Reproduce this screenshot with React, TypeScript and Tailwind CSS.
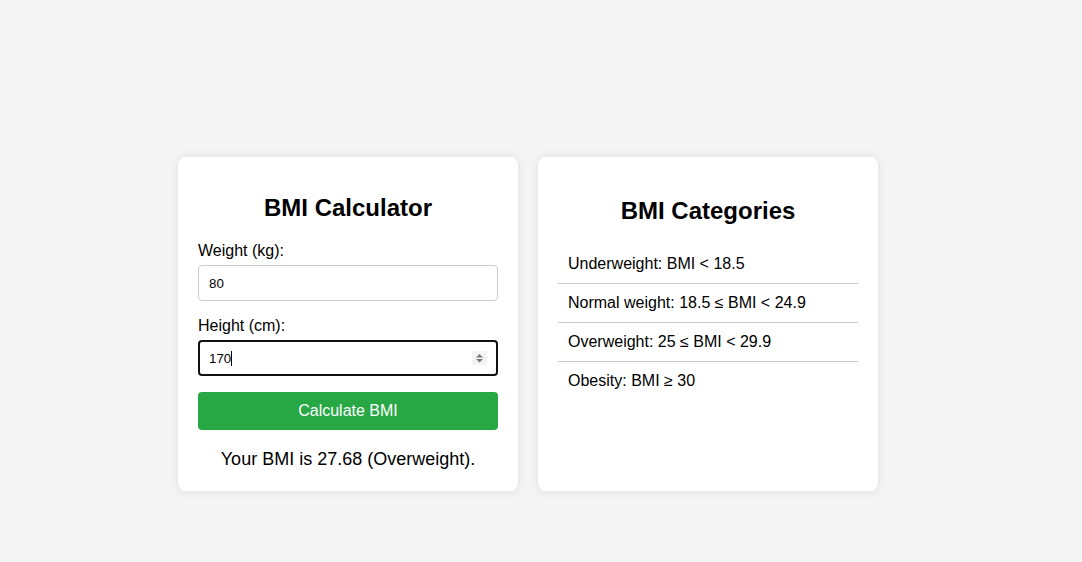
import { useState } from "react";

const categories = [
  "Underweight: BMI < 18.5",
  "Normal weight: 18.5 ≤ BMI < 24.9",
  "Overweight: 25 ≤ BMI < 29.9",
  "Obesity: BMI ≥ 30",
];

function Spinner() {
  return (
    <svg width="15" height="14" viewBox="0 0 15 14" className="absolute right-[11px] top-[11px] pointer-events-none">
      <rect x="0" y="0" width="15" height="14" fill="#f3f3f3" />
      <path d="M7.5 3 L11 6.5 L4 6.5 Z" fill="#7a7a7a" />
      <path d="M4 8 L11 8 L7.5 11.5 Z" fill="#7a7a7a" />
    </svg>
  );
}

export default function App() {
  const [weight, setWeight] = useState("80");
  const [height, setHeight] = useState("170");

  return (
    <div
      className="min-h-[562px] bg-[#f4f4f4] flex items-stretch gap-5 pl-[178px] pt-[157px] pb-[71px] text-black"
      style={{ fontFamily: '"Liberation Sans", Arial, sans-serif' }}
    >
      {/* calculator */}
      <div className="w-[340px] bg-white rounded-lg shadow-[0_0_10px_rgba(0,0,0,0.1)] px-5 pt-5 pb-[21px] flex flex-col">
        <h2 className="mt-[17px] mb-5 text-2xl leading-[28px] font-bold text-center">BMI Calculator</h2>

        <label className="block text-base leading-[18px] mb-[5px]">Weight (kg):</label>
        <input
          type="text"
          value={weight}
          onChange={(e) => setWeight(e.target.value)}
          className="w-full h-9 border border-[#cccccc] rounded px-[10px] text-[13.33px] outline-none mb-4"
          style={{ fontFamily: '"Liberation Sans", Arial, sans-serif' }}
        />

        <label className="block text-base leading-[18px] mb-[5px]">Height (cm):</label>
        <div className="relative mb-4">
          <input
            type="text"
            value={height}
            onChange={(e) => setHeight(e.target.value)}
            className="w-full h-9 border-2 border-[#101010] rounded px-[9px] text-[13.33px] outline-none"
            style={{ fontFamily: '"Liberation Sans", Arial, sans-serif' }}
          />
          {/* text caret */}
          <span className="absolute left-[33px] top-[11px] w-px h-[15px] bg-black pointer-events-none" />
          <Spinner />
        </div>

        <button className="w-full h-[38px] bg-[#28a745] text-white text-base rounded">Calculate BMI</button>

        <p className="mt-[19px] text-lg leading-[21px] text-center">Your BMI is 27.68 (Overweight).</p>
      </div>

      {/* categories */}
      <div className="w-[340px] bg-white rounded-lg shadow-[0_0_10px_rgba(0,0,0,0.1)] p-5">
        <h2 className="mt-5 mb-5 text-2xl leading-[28px] font-bold text-center">BMI Categories</h2>
        <ul>
          {categories.map((c, i) => (
            <li
              key={c}
              className={`px-[10px] py-[10px] text-base leading-[18px] ${i < categories.length - 1 ? "border-b border-[#cccccc]" : ""}`}
            >
              {c}
            </li>
          ))}
        </ul>
      </div>
    </div>
  );
}
